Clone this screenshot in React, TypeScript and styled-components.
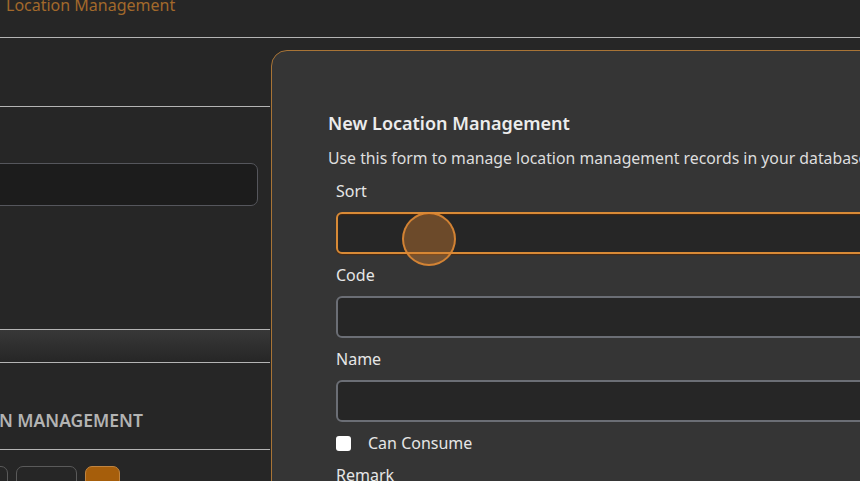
import styled, { createGlobalStyle } from "styled-components"

const GlobalStyle = createGlobalStyle`
    html, body {
        margin: 0;
        padding: 0;
        background: #262626;
        overflow: hidden;
        font-family: "Noto Sans", "Open Sans", sans-serif;
    }
    * { box-sizing: border-box; }
`

const Page = styled.div({
    position: 'relative',
    width: 860,
    height: 481,
    overflow: 'hidden',
    background: '#262626',
})

const TopBar = styled.div({
    display: 'flex',
    alignItems: 'flex-start',
    height: 38,
    borderBottom: '1px solid #b4b4b4',
    paddingLeft: 6,
})

const PageTitle = styled.div({
    marginTop: -6,
    fontSize: 16,
    lineHeight: '22px',
    color: '#a2692b',
})

const Pane = styled.div({
    width: 360,
    marginLeft: -90,
    display: 'flex',
    flexDirection: 'column',
})

const Section = styled.div<{ $h: number }>(({ $h }) => ({
    display: 'flow-root',
    height: $h,
    borderBottom: '1px solid #b4b4b4',
    padding: '0 12px',
    flexShrink: 0,
}))

const SearchBox = styled.div({
    marginTop: 56,
    height: 43,
    background: '#1c1c1c',
    border: '1.5px solid #55565c',
    borderRadius: 7,
})

const Band = styled(Section)({
    background: 'linear-gradient(#383838, #262626)',
})

const Heading = styled.div({
    marginTop: 45,
    fontSize: 17.5,
    lineHeight: '24px',
    fontWeight: 600,
    color: '#b3b3b3',
    paddingLeft: 2,
})

const Toolbar = styled.div({
    display: 'flex',
    gap: 8,
    padding: '16px 0 0 28px',
})

const ToolButton = styled.button<{ $w: number; $primary?: boolean }>(({ $w, $primary }) => ({
    width: $w,
    height: 36,
    borderRadius: 7,
    border: $primary ? '1px solid #c08440' : '1px solid #5a5a5a',
    background: $primary ? '#a65e0b' : 'transparent',
    padding: 0,
}))

const Modal = styled.div({
    position: 'absolute',
    left: 271,
    top: 50,
    width: 780,
    height: 520,
    background: '#353535',
    border: '1px solid #a87436',
    borderRadius: 16,
    padding: '60px 57px 0 56px',
    display: 'flex',
    flexDirection: 'column',
    gap: 10,
})

const ModalTitle = styled.div({
    fontSize: 18,
    lineHeight: '25px',
    fontWeight: 600,
    color: '#ececec',
    whiteSpace: 'nowrap',
})

const ModalText = styled.div({
    fontSize: 15.8,
    lineHeight: '24px',
    color: '#dedede',
    whiteSpace: 'nowrap',
})

const Form = styled.div({
    display: 'flex',
    flexDirection: 'column',
    gap: 10,
    paddingLeft: 8,
})

const Label = styled.div({
    fontSize: 16,
    lineHeight: '22px',
    color: '#e6e6e6',
})

const FieldWrap = styled.div({
    position: 'relative',
})

const Field = styled.div<{ $focus?: boolean }>(({ $focus }) => ({
    height: 42,
    background: '#262626',
    border: $focus ? '2px solid #d88a36' : '2px solid #6b6e75',
    borderRadius: 6,
    boxShadow: $focus ? '0 1px 1px rgba(80, 40, 10, 0.8), inset 0 1px 1px rgba(80, 40, 10, 0.8)' : 'none',
}))

const ClickRing = styled.div({
    position: 'absolute',
    left: 66,
    top: 0,
    width: 54,
    height: 54,
    borderRadius: '50%',
    background: 'rgba(214, 130, 50, 0.4)',
    border: '2px solid rgba(222, 136, 52, 0.9)',
})

const CheckRow = styled.label({
    display: 'flex',
    alignItems: 'center',
    gap: 17,
    height: 22,
    fontSize: 16,
    color: '#e6e6e6',
})

const CheckBox = styled.span({
    width: 15,
    height: 15,
    borderRadius: 3,
    background: '#ffffff',
    flexShrink: 0,
})

export default function App() {
    return <>
        <GlobalStyle />
        <Page>
            <TopBar>
                <PageTitle>Location Management</PageTitle>
            </TopBar>
            <Pane>
                <Section $h={69} />
                <Section $h={223}>
                    <SearchBox />
                </Section>
                <Band $h={33} />
                <Section $h={87}>
                    <Heading>LOCATION MANAGEMENT</Heading>
                </Section>
                <Toolbar>
                    <ToolButton $w={70} aria-label="Export" />
                    <ToolButton $w={61} aria-label="Filter" />
                    <ToolButton $w={35} $primary aria-label="Add" />
                </Toolbar>
            </Pane>
            <Modal>
                <ModalTitle>New Location Management</ModalTitle>
                <ModalText>Use this form to manage location management records in your database.</ModalText>
                <Form>
                    <Label>Sort</Label>
                    <FieldWrap>
                        <Field $focus />
                        <ClickRing />
                    </FieldWrap>
                    <Label>Code</Label>
                    <Field />
                    <Label>Name</Label>
                    <Field />
                    <CheckRow>
                        <CheckBox />
                        Can Consume
                    </CheckRow>
                    <Label>Remark</Label>
                </Form>
            </Modal>
        </Page>
    </>
}
